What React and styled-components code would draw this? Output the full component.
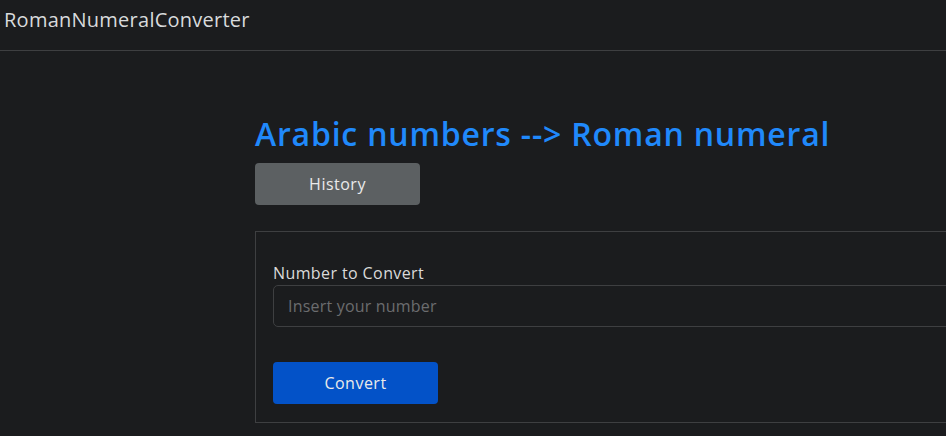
import styled, { createGlobalStyle } from "styled-components";

const Global = createGlobalStyle`
  html, body {
    margin: 0;
    padding: 0;
    background-color: #1b1c1e;
    overflow: hidden;
  }
  body {
    font-family: "Open Sans", "Noto Sans", sans-serif;
    color: #dcdcdc;
  }
`

const Navbar = styled.nav`
  height: 50px;
  border-bottom: 1px solid #3e3f41;
  display: flex;
  align-items: center;
  padding: 0 4px;
  box-sizing: content-box;
`

const Brand = styled.span`
  font-size: 20px;
  letter-spacing: 0.25px;
  color: #d8dadc;
  margin-top: -12px;
`

const Main = styled.main`
  padding: 67px 0 0 255px;
  width: 760px;
`

const Title = styled.h1`
  margin: 0 0 13px;
  font-size: 32px;
  font-weight: 600;
  letter-spacing: 0.8px;
  color: #2089fb;
  line-height: 32px;
`

const Button = styled.button`
  width: 165px;
  height: 42px;
  border: none;
  border-radius: 4px;
  font-family: inherit;
  font-size: 16px;
  letter-spacing: 0.5px;
  color: #eaeaea;
  background-color: ${(p) => (p.$primary ? "#0352c8" : "#5c6062")};
  cursor: pointer;
`

const Card = styled.section`
  margin-top: 26px;
  border: 1px solid #3e3f41;
  padding: 29px 17px 18px;
  display: flex;
  flex-direction: column;
  align-items: flex-start;
`

const Label = styled.label`
  font-size: 16px;
  letter-spacing: 0.4px;
  color: #dadada;
  line-height: 24px;
`

const Input = styled.input`
  width: 100%;
  height: 42px;
  box-sizing: border-box;
  margin: 0 0 35px;
  border: 1px solid #3e3f41;
  border-radius: 5px;
  background-color: transparent;
  padding: 0 14px;
  font-family: inherit;
  font-size: 16px;
  letter-spacing: 0.2px;
  color: #dadada;
  &::placeholder {
    color: #6b6c6e;
  }
`

const App = () => {
  return (
    <>
      <Global />
      <Navbar>
        <Brand>RomanNumeralConverter</Brand>
      </Navbar>
      <Main>
        <Title>Arabic numbers --&gt; Roman numeral</Title>
        <Button>History</Button>
        <Card>
          <Label htmlFor="number">Number to Convert</Label>
          <Input id="number" placeholder="Insert your number" />
          <Button $primary>Convert</Button>
        </Card>
      </Main>
    </>
  )
}

export default App
